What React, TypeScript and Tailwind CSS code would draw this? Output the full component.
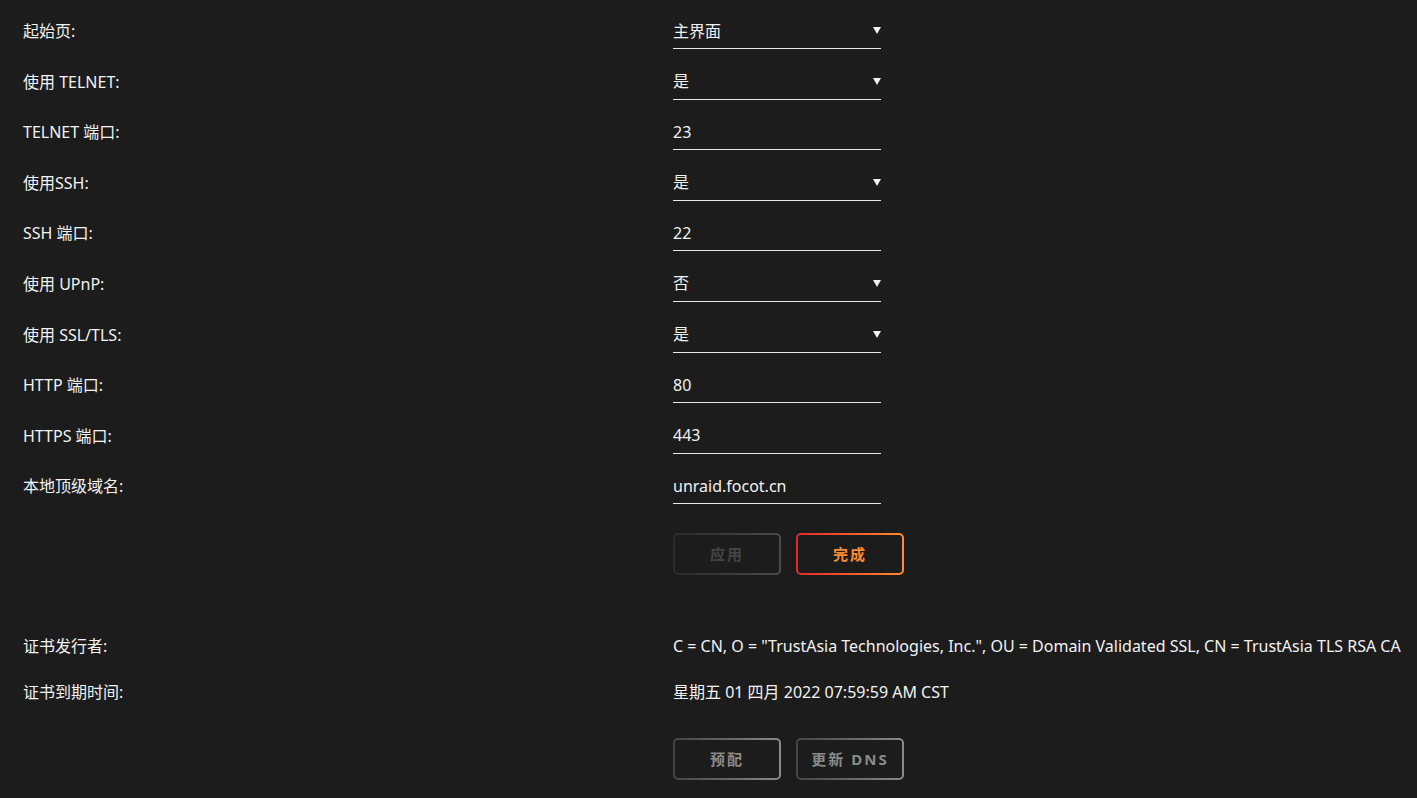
const rows: { label: string; value: string; select?: boolean }[] = [
  { label: "起始页:", value: "主界面", select: true },
  { label: "使用 TELNET:", value: "是", select: true },
  { label: "TELNET 端口:", value: "23" },
  { label: "使用SSH:", value: "是", select: true },
  { label: "SSH 端口:", value: "22" },
  { label: "使用 UPnP:", value: "否", select: true },
  { label: "使用 SSL/TLS:", value: "是", select: true },
  { label: "HTTP 端口:", value: "80" },
  { label: "HTTPS 端口:", value: "443" },
  { label: "本地顶级域名:", value: "unraid.focot.cn" },
];

function Field({ value, select }: { value: string; select?: boolean }) {
  return (
    <div className="relative flex h-[38px] w-[208px] items-center border-b border-[#e8e8e8] pt-[2px]">
      <span>{value}</span>
      {select && (
        <svg className="absolute right-0 top-[16px]" width="8" height="7" viewBox="0 0 8 7">
          <path d="M0 0H8L4 7Z" fill="#f2f2f2" />
        </svg>
      )}
    </div>
  );
}

function GradButton({ children, from, to, text }: { children: React.ReactNode; from: string; to: string; text: string }) {
  return (
    <div className="rounded-[5px] p-[2px]" style={{ background: `linear-gradient(90deg, ${from}, ${to})` }}>
      <div className={`flex h-[38px] w-[104px] items-center justify-center rounded-[3px] bg-[#1c1c1c] text-[15px] font-bold tracking-[2px] ${text}`}>
        {children}
      </div>
    </div>
  );
}

export default function App() {
  return (
    <div
      className="min-h-[798px] w-full bg-[#1c1c1c] pl-[23px] pt-[11px] text-[16px] text-[#f2f2f2]"
      style={{ fontFamily: '"Noto Sans", "Noto Sans CJK SC", sans-serif' }}
    >
      {rows.map((r) => (
        <div key={r.label} className="flex h-[50.6px]">
          <div className="flex h-[38px] w-[650px] items-center pt-[2px]">{r.label}</div>
          <Field value={r.value} select={r.select} />
        </div>
      ))}
      <div className="flex pt-[16px]">
        <div className="w-[650px]" />
        <div className="flex gap-[15px]">
          <GradButton from="#2a2a2a" to="#4a4a4a" text="text-[#444444]">应用</GradButton>
          <GradButton from="#e22828" to="#ff8c2f" text="text-[#ff8c2f]">完成</GradButton>
        </div>
      </div>
      <div className="flex pt-[48px]">
        <div className="flex h-[46px] w-[650px] items-center">证书发行者:</div>
        <div className="flex h-[46px] items-center whitespace-nowrap">
          C = CN, O = "TrustAsia Technologies, Inc.", OU = Domain Validated SSL, CN = TrustAsia TLS RSA CA
        </div>
      </div>
      <div className="flex">
        <div className="flex h-[46px] w-[650px] items-center">证书到期时间:</div>
        <div className="flex h-[46px] items-center">星期五 01 四月 2022 07:59:59 AM CST</div>
      </div>
      <div className="flex pt-[23px]">
        <div className="w-[650px]" />
        <div className="flex gap-[15px]">
          <GradButton from="#444444" to="#8a8a8a" text="text-[#8a8a8a]">预配</GradButton>
          <GradButton from="#444444" to="#8a8a8a" text="text-[#8a8a8a]">更新 DNS</GradButton>
        </div>
      </div>
    </div>
  );
}
